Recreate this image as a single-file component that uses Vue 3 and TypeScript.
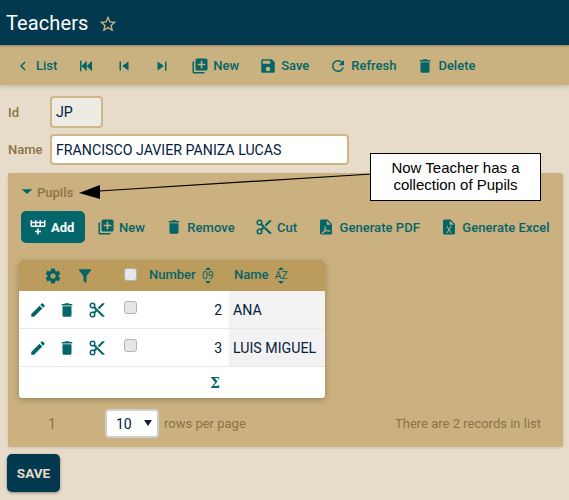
<script setup lang="ts">
const icons: Record<string, string> = {
  back: 'M15.41,16.58L10.83,12L15.41,7.41L14,6L8,12L14,18L15.41,16.58Z',
  first: 'M20,5V19L13,12M6,5V19H4V5M13,5V19L6,12',
  prev: 'M6,18V6H8V18H6M9.5,12L18,6V18L9.5,12Z',
  next: 'M16,18H18V6H16M6,18L14.5,12L6,6V18Z',
  add: 'M22,10A2,2 0 0,1 20,12H4A2,2 0 0,1 2,10V3H4V5H8V3H10V5H14V3H16V5H20V3H22V10M4,10H8V7H4V10M10,10H14V7H10V10M20,10V7H16V10H20M11,14H13V17H16V19H13V22H11V19H8V17H11V14Z',
  new: 'M19,11H15V15H13V11H9V9H13V5H15V9H19M20,2H8A2,2 0 0,0 6,4V16A2,2 0 0,0 8,18H20A2,2 0 0,0 22,16V4A2,2 0 0,0 20,2M4,6H2V20A2,2 0 0,0 4,22H18V20H4V6Z',
  save: 'M15,9H5V5H15M12,19A3,3 0 0,1 9,16A3,3 0 0,1 12,13A3,3 0 0,1 15,16A3,3 0 0,1 12,19M17,3H5C3.89,3 3,3.9 3,5V19A2,2 0 0,0 5,21H19A2,2 0 0,0 21,19V7L17,3Z',
  refresh: 'M17.65,6.35C16.2,4.9 14.21,4 12,4A8,8 0 0,0 4,12A8,8 0 0,0 12,20C15.73,20 18.84,17.45 19.73,14H17.65C16.83,16.33 14.61,18 12,18A6,6 0 0,1 6,12A6,6 0 0,1 12,6C13.66,6 15.14,6.69 16.22,7.78L13,11H20V4L17.65,6.35Z',
  trash: 'M19,4H15.5L14.5,3H9.5L8.5,4H5V6H19M6,19A2,2 0 0,0 8,21H16A2,2 0 0,0 18,19V7H6V19Z',
  cut: 'M19,3L13,9L15,11L22,4V3M12,12.5A0.5,0.5 0 0,1 11.5,12A0.5,0.5 0 0,1 12,11.5A0.5,0.5 0 0,1 12.5,12A0.5,0.5 0 0,1 12,12.5M6,20A2,2 0 0,1 4,18C4,16.89 4.9,16 6,16A2,2 0 0,1 8,18C8,19.11 7.1,20 6,20M6,8A2,2 0 0,1 4,6C4,4.89 4.9,4 6,4A2,2 0 0,1 8,6C8,7.11 7.1,8 6,8M9.64,7.64C9.87,7.14 10,6.59 10,6A4,4 0 0,0 6,2A4,4 0 0,0 2,6A4,4 0 0,0 6,10C6.59,10 7.14,9.87 7.64,9.64L10,12L7.64,14.36C7.14,14.13 6.59,14 6,14A4,4 0 0,0 2,18A4,4 0 0,0 6,22A4,4 0 0,0 10,18C10,17.41 9.87,16.86 9.64,16.36L12,14L19,21H22V20L9.64,7.64Z',
  pdf: 'M14,2H6A2,2 0 0,0 4,4V20A2,2 0 0,0 6,22H18A2,2 0 0,0 20,20V8L14,2ZM13,3.5V9H18.5L13,3.5ZM10.9,10.5C11.7,10.5 11.9,11.5 11.5,13.6C12.1,15 13,16 14.2,16.6C15.6,16.4 17.6,16.4 17.8,17.4C18,18.4 16.4,18.6 13.8,17.8C12.4,18 11,18.4 9.6,19C8.4,21 7,21.6 6.4,20.8C6,20 7,18.8 8.6,18C9.4,16.6 10,15.4 10.4,13.8C10,12 10.2,10.5 10.9,10.5ZM11,15C10.8,15.8 10.4,16.6 10,17.4C10.8,17.1 11.6,16.9 12.4,16.7C11.9,16.2 11.4,15.6 11,15Z',
  excel: 'M14,2H6A2,2 0 0,0 4,4V20A2,2 0 0,0 6,22H18A2,2 0 0,0 20,20V8L14,2M15.5,20H14.2L12,16.6L9.8,20H8.5L11.3,15.5L8.5,11H9.8L12,14.4L14.2,11H15.5L12.7,15.5L15.5,20M13,9V3.5L18.5,9H13Z',
  cog: 'M12,15.5A3.5,3.5 0 0,1 8.5,12A3.5,3.5 0 0,1 12,8.5A3.5,3.5 0 0,1 15.5,12A3.5,3.5 0 0,1 12,15.5M19.43,12.97C19.47,12.65 19.5,12.33 19.5,12C19.5,11.67 19.47,11.34 19.43,11L21.54,9.37C21.73,9.22 21.78,8.95 21.66,8.73L19.66,5.27C19.54,5.05 19.27,4.96 19.05,5.05L16.56,6.05C16.04,5.66 15.5,5.32 14.87,5.07L14.5,2.42C14.46,2.18 14.25,2 14,2H10C9.75,2 9.54,2.18 9.5,2.42L9.13,5.07C8.5,5.32 7.96,5.66 7.44,6.05L4.95,5.05C4.73,4.96 4.46,5.05 4.34,5.27L2.34,8.73C2.21,8.95 2.27,9.22 2.46,9.37L4.57,11C4.53,11.34 4.5,11.67 4.5,12C4.5,12.33 4.53,12.65 4.57,12.97L2.46,14.63C2.27,14.78 2.21,15.05 2.34,15.27L4.34,18.73C4.46,18.95 4.73,19.03 4.95,18.95L7.44,17.94C7.96,18.34 8.5,18.68 9.13,18.93L9.5,21.58C9.54,21.82 9.75,22 10,22H14C14.25,22 14.46,21.82 14.5,21.58L14.87,18.93C15.5,18.67 16.04,18.34 16.56,17.94L19.05,18.95C19.27,19.03 19.54,18.95 19.66,18.73L21.66,15.27C21.78,15.05 21.73,14.78 21.54,14.63L19.43,12.97Z',
  filter: 'M14,12V19.88C14.04,20.18 13.94,20.5 13.71,20.71C13.32,21.1 12.69,21.1 12.3,20.71L10.29,18.7C10.06,18.47 9.96,18.16 10,17.87V12H9.97L4.21,4.62C3.87,4.19 3.95,3.56 4.38,3.22C4.57,3.08 4.78,3 5,3H19C19.22,3 19.43,3.08 19.62,3.22C20.05,3.56 20.13,4.19 19.79,4.62L14.03,12H14Z',
  pencil: 'M20.71,7.04C21.1,6.65 21.1,6 20.71,5.63L18.37,3.29C18,2.9 17.35,2.9 16.96,3.29L15.12,5.12L18.87,8.87M3,17.25V21H6.75L17.81,9.93L14.06,6.18L3,17.25Z',
  star: 'M12,15.39L8.24,17.66L9.23,13.38L5.91,10.5L10.29,10.13L12,6.09L13.71,10.13L18.09,10.5L14.77,13.38L15.76,17.66M22,9.24L14.81,8.63L12,2L9.19,8.62L2,9.24L7.45,13.97L5.82,21L12,17.27L18.18,21L16.54,13.97L22,9.24Z',
}

const mainActions = [
  { icon: 'new', label: 'New' },
  { icon: 'save', label: 'Save' },
  { icon: 'refresh', label: 'Refresh' },
  { icon: 'trash', label: 'Delete' },
]

const listActions = [
  { icon: 'new', label: 'New' },
  { icon: 'trash', label: 'Remove' },
  { icon: 'cut', label: 'Cut' },
  { icon: 'pdf', label: 'Generate PDF' },
  { icon: 'excel', label: 'Generate Excel' },
]

const pupils = [
  { number: 2, name: 'ANA' },
  { number: 3, name: 'LUIS MIGUEL' },
]
</script>

<template>
  <div class="page">
    <header class="title-bar">
      <h1>Teachers</h1>
      <svg class="star" viewBox="0 0 24 24"><path :d="icons.star" /></svg>
    </header>

    <nav class="toolbar">
      <a class="action">
        <svg viewBox="0 0 24 24"><path :d="icons.back" /></svg>List
      </a>
      <a class="action"><svg viewBox="0 0 24 24"><path :d="icons.first" /></svg></a>
      <a class="action"><svg viewBox="0 0 24 24"><path :d="icons.prev" /></svg></a>
      <a class="action"><svg viewBox="0 0 24 24"><path :d="icons.next" /></svg></a>
      <a v-for="a in mainActions" :key="a.label" class="action">
        <svg viewBox="0 0 24 24"><path :d="icons[a.icon]" /></svg>{{ a.label }}
      </a>
    </nav>

    <main class="content">
      <div class="field">
        <label>Id</label>
        <input class="input id-input" value="JP" readonly />
      </div>
      <div class="field">
        <label>Name</label>
        <input class="input name-input" value="FRANCISCO JAVIER PANIZA LUCAS" />
      </div>

      <section class="panel">
        <div class="panel-title">
          <svg viewBox="0 0 24 24"><path d="M4,8L12,15L20,8H4Z" /></svg>
          <span>Pupils</span>
        </div>

        <div class="list-actions">
          <button class="add-btn">
            <svg viewBox="0 0 24 24"><path :d="icons.add" /></svg>Add
          </button>
          <a v-for="a in listActions" :key="a.label" class="action">
            <svg viewBox="0 0 24 24"><path :d="icons[a.icon]" /></svg>{{ a.label }}
          </a>
        </div>

        <table class="grid">
          <colgroup>
            <col style="width: 33px" />
            <col style="width: 30px" />
            <col style="width: 29px" />
            <col style="width: 36px" />
            <col style="width: 82px" />
            <col style="width: 96px" />
          </colgroup>
          <thead>
            <tr>
              <th colspan="3">
                <div class="head-tools">
                  <svg viewBox="0 0 24 24"><path :d="icons.cog" /></svg>
                  <svg viewBox="0 0 24 24"><path :d="icons.filter" /></svg>
                </div>
              </th>
              <th class="check-head"><input type="checkbox" class="check" /></th>
              <th class="number-head">
                Number
                <span class="sort">
                  <i class="up"></i><b>09</b><i class="down"></i>
                </span>
              </th>
              <th class="name-head">
                Name
                <span class="sort">
                  <i class="up"></i><b>AZ</b><i class="down"></i>
                </span>
              </th>
            </tr>
          </thead>
          <tbody>
            <tr v-for="p in pupils" :key="p.number">
              <td class="icon-cell first"><svg viewBox="0 0 24 24"><path :d="icons.pencil" /></svg></td>
              <td class="icon-cell"><svg viewBox="0 0 24 24"><path :d="icons.trash" /></svg></td>
              <td class="icon-cell"><svg viewBox="0 0 24 24"><path :d="icons.cut" /></svg></td>
              <td class="check-cell"><input type="checkbox" class="check" /></td>
              <td class="number-cell">{{ p.number }}</td>
              <td class="name-cell">{{ p.name }}</td>
            </tr>
          </tbody>
          <tfoot>
            <tr>
              <td colspan="4"></td>
              <td class="sum-cell"><span>Σ</span></td>
              <td></td>
            </tr>
          </tfoot>
        </table>

        <div class="pager">
          <span class="page-no">1</span>
          <div class="rows-select">10<i></i></div>
          <span class="muted">rows per page</span>
          <span class="muted total">There are 2 records in list</span>
        </div>
      </section>

      <button class="save-btn">SAVE</button>
    </main>

    <svg class="arrow" viewBox="0 0 569 500" width="569" height="500">
      <line x1="372" y1="174" x2="99" y2="191" stroke="#000" stroke-width="1.2" />
      <polygon points="79,193 100,185 100,199" fill="#000" />
    </svg>
    <div class="callout">Now Teacher has a<br />collection of Pupils</div>
  </div>
</template>

<style scoped>
.page {
  position: relative;
  width: 569px;
  height: 500px;
  overflow: hidden;
  background: #e7dcc9;
  font-family: Roboto, sans-serif;
  font-size: 14px;
  color: #04203c;
}

.title-bar {
  display: flex;
  align-items: center;
  height: 45px;
  padding-left: 6px;
  box-sizing: border-box;
  background: #03394e;
  box-shadow: 0 1px 2px rgba(0, 0, 0, 0.3);
  position: relative;
  z-index: 2;
}

.title-bar h1 {
  margin: 0;
  font-size: 20px;
  font-weight: 400;
  letter-spacing: 0.1px;
  color: #fff;
}

.star {
  width: 20px;
  height: 20px;
  margin-left: 10px;
  margin-top: 3px;
  fill: #c9b27f;
}

.toolbar {
  display: flex;
  align-items: center;
  gap: 20px;
  height: 40px;
  padding-left: 14px;
  box-sizing: border-box;
  background: #c9b27f;
  box-shadow: 0 2px 4px rgba(0, 0, 0, 0.15);
  position: relative;
  z-index: 1;
}

.action {
  display: inline-flex;
  align-items: center;
  gap: 4px;
  font-size: 13px;
  font-weight: 500;
  color: #046568;
  white-space: nowrap;
}

.action svg {
  width: 18px;
  height: 18px;
  fill: #046568;
  fill-rule: evenodd;
  flex-shrink: 0;
}

.toolbar .action {
  padding-top: 1px;
}

.content {
  padding: 11px 6px 0 8px;
}

.field {
  display: flex;
  align-items: center;
  margin-bottom: 6px;
}

.field label {
  width: 42px;
  font-weight: 500;
  font-size: 13px;
  color: #8b7347;
}

.input {
  height: 31px;
  box-sizing: border-box;
  border: 2px solid #cdb687;
  border-radius: 4px;
  padding: 0 4px;
  font-family: Roboto, sans-serif;
  font-size: 14.2px;
  color: #04203c;
  background: #fff;
  outline: none;
}

.id-input {
  width: 53px;
  height: 32px;
  background: #ecebe4;
}

.name-input {
  width: 299px;
}

.panel {
  margin-top: 8px;
  height: 274px;
  box-sizing: border-box;
  padding: 10px 13px 0 11px;
  background: #cab17f;
  border-radius: 2px;
  box-shadow: 0 1px 3px rgba(0, 0, 0, 0.12);
}

.panel-title {
  display: flex;
  align-items: center;
  height: 18px;
  font-weight: 500;
  font-size: 13px;
  color: #8b7347;
}

.panel-title svg {
  width: 16px;
  height: 16px;
  fill: #046568;
  margin-right: 2px;
}

.list-actions {
  display: flex;
  align-items: center;
  gap: 20.3px;
  margin-top: 10px;
  padding-left: 2px;
}

.list-actions .action {
  letter-spacing: 0.05px;
}

.add-btn {
  display: inline-flex;
  align-items: center;
  gap: 4px;
  width: 64px;
  height: 32px;
  padding: 0 0 0 8px;
  border: none;
  border-radius: 5px;
  background: #02666a;
  color: #fff;
  font-family: Roboto, sans-serif;
  font-size: 13px;
  font-weight: 700;
  margin-right: -8.3px;
}

.add-btn svg {
  width: 18px;
  height: 18px;
  fill: #fff;
}

.grid {
  margin-top: 17px;
  width: 306px;
  table-layout: fixed;
  border-collapse: separate;
  border-spacing: 0;
  background: #fff;
  border-radius: 3px;
  box-shadow: 0 2px 6px rgba(0, 0, 0, 0.25);
}

.grid th {
  height: 31px;
  padding: 0;
  background: #bc9c5c;
  font-weight: 500;
  font-size: 13px;
  color: #046568;
  text-align: left;
  white-space: nowrap;
}

.grid th:first-child {
  border-top-left-radius: 3px;
}

.grid th:last-child {
  border-top-right-radius: 3px;
}

.head-tools {
  display: flex;
  align-items: center;
  gap: 14px;
  padding-left: 25px;
}

.head-tools svg {
  width: 18px;
  height: 18px;
  fill: #046568;
  fill-rule: evenodd;
}

.grid td {
  height: 37px;
  padding: 0;
  border-bottom: 1px solid #e8e8e8;
}

.grid tfoot td {
  height: 31px;
  border-bottom: none;
}

.icon-cell {
  text-align: center;
  line-height: 0;
}

.icon-cell.first {
  padding-left: 4px !important;
}

.icon-cell svg {
  width: 18px;
  height: 18px;
  fill: #046568;
  fill-rule: evenodd;
}

.check-cell,
.grid th.check-head {
  text-align: center;
  line-height: 0;
}

.check {
  appearance: none;
  width: 13px;
  height: 13px;
  margin: 0 0 4px 3px;
  border: 1px solid #b3b3b3;
  border-radius: 3px;
  background: #e6e6e6;
  vertical-align: middle;
}

.check-head .check {
  margin-bottom: 2px;
}

.number-head {
  padding-left: 2px !important;
}

.name-head {
  padding-left: 5px !important;
}

.sort {
  display: inline-flex;
  flex-direction: column;
  align-items: center;
  vertical-align: middle;
  margin-left: 3px;
}

.sort b {
  font-size: 10.5px;
  font-weight: 400;
  line-height: 9px;
  margin: 1px 0;
}

.sort i {
  width: 0;
  height: 0;
  border-left: 3px solid transparent;
  border-right: 3px solid transparent;
}

.sort .up {
  border-bottom: 3px solid #046568;
}

.sort .down {
  border-top: 3px solid #046568;
}

.number-cell {
  text-align: right;
  padding-right: 7px !important;
}

.name-cell {
  padding-left: 4px !important;
  background: #f2f2f2;
  font-size: 14.2px;
  white-space: nowrap;
}

.sum-cell {
  text-align: center;
  padding-left: 54px !important;
}

.sum-cell span {
  font-family: "DejaVu Serif", serif;
  font-size: 14px;
  font-weight: 700;
  color: #046568;
}

.pager {
  display: flex;
  align-items: center;
  margin-top: 11px;
  height: 29px;
  color: #8b7347;
  font-size: 13px;
}

.page-no {
  width: 86px;
  padding-left: 29px;
  box-sizing: border-box;
  font-size: 14px;
}

.rows-select {
  display: flex;
  align-items: center;
  justify-content: space-between;
  width: 54px;
  height: 29px;
  box-sizing: border-box;
  padding: 0 2px 0 9px;
  border: 2px solid #cfcfcf;
  border-radius: 4px;
  background: #fff;
  font-size: 14px;
  color: #04203c;
}

.rows-select i {
  width: 0;
  height: 0;
  margin-right: 3px;
  margin-bottom: 2px;
  border-left: 4px solid transparent;
  border-right: 4px solid transparent;
  border-top: 6px solid #101c3c;
}

.muted {
  margin-left: 5px;
}

.total {
  margin-left: auto;
  margin-right: 9px;
}

.save-btn {
  display: block;
  width: 53px;
  height: 38px;
  margin: 7px 0 0 -1px;
  border: none;
  border-radius: 5px;
  background: #03394e;
  color: #e7dcc9;
  font-family: Roboto, sans-serif;
  font-size: 13.5px;
  font-weight: 700;
  box-shadow: 0 1px 3px rgba(0, 0, 0, 0.4);
}

.arrow {
  position: absolute;
  left: 0;
  top: 0;
  pointer-events: none;
}

.callout {
  position: absolute;
  left: 370px;
  top: 153px;
  width: 171px;
  height: 48px;
  box-sizing: border-box;
  border: 1px solid #000;
  padding-bottom: 2px;
  background: #fff;
  display: flex;
  align-items: center;
  justify-content: center;
  text-align: center;
  font-family: "Liberation Sans", Arial, sans-serif;
  font-size: 15px;
  line-height: 17px;
  color: #000;
}
</style>
